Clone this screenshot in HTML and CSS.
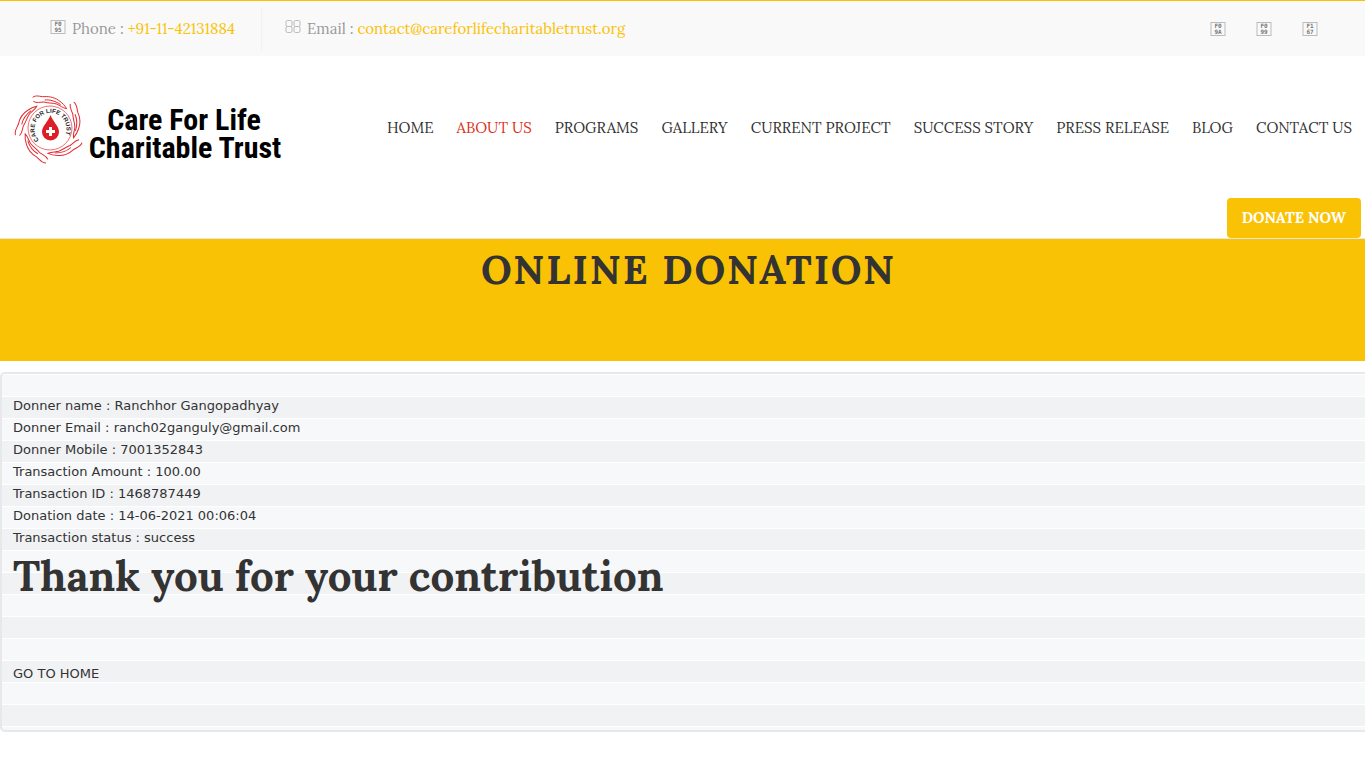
FILE: index.html
```html
<!DOCTYPE html>
<html lang="en">
<head>
<meta charset="utf-8">
<title>Online Donation - Care For Life Charitable Trust</title>
<link rel="stylesheet" href="styles.css">
</head>
<body>
<div class="topbar">
  <div class="contact"><svg class="icon" width="16" height="14" viewBox="0 0 16 14"><rect x="1" y=".5" width="14" height="13"/><text x="8" y="6">F0</text><text x="8" y="12">95</text></svg>Phone : <a href="#">+91-11-42131884</a></div>
  <div class="contact"><svg class="icon" width="16" height="14" viewBox="0 0 16 14"><rect x="1" y=".5" width="6" height="6" rx="1.500"/><rect x="9" y=".5" width="6" height="6" rx="1.500"/><rect x="1" y="6.500" width="6" height="6" rx="1.500"/><rect x="9" y="6.500" width="6" height="6" rx="1.500"/></svg>Email : <a href="#">contact@careforlifecharitabletrust.org</a></div>
  <div class="social">
    <a href="#" aria-label="Facebook"><svg class="icon" width="16" height="14" viewBox="0 0 16 14"><rect x="1" y=".5" width="14" height="13"/><text x="8" y="6">F0</text><text x="8" y="12">9A</text></svg></a>
    <a href="#" aria-label="Twitter"><svg class="icon" width="16" height="14" viewBox="0 0 16 14"><rect x="1" y=".5" width="14" height="13"/><text x="8" y="6">F0</text><text x="8" y="12">99</text></svg></a>
    <a href="#" aria-label="YouTube"><svg class="icon" width="16" height="14" viewBox="0 0 16 14"><rect x="1" y=".5" width="14" height="13"/><text x="8" y="6">F1</text><text x="8" y="12">67</text></svg></a>
  </div>
</div>
<header class="header">
  <div class="header-row">
    <a class="logo" href="#" aria-label="Care For Life Charitable Trust">
      <svg width="266" height="66" viewBox="0 0 266 66">
        <defs>
          <path id="ring" d="M23 44A16 16 0 1 1 46 44"/>
          <g id="hand">
            <path d="M-52-92C-42-100-30-94-18-94C0-96 18-90 30-80C38-74 44-68 50-58C38-60 30-68 20-72C6-76-6-74-18-78C-30-78-40-74-50-80"/>
            <path d="M-16-84C0-86 18-80 32-70"/>
          </g>
        </defs>
        <g class="hands" transform="translate(34 32) scale(.333)">
          <use href="#hand"/><use href="#hand" transform="rotate(72)"/><use href="#hand" transform="rotate(144)"/><use href="#hand" transform="rotate(216)"/><use href="#hand" transform="rotate(288)"/>
          <circle r="66"/>
        </g>
        <text class="ring-text"><textPath href="#ring">CARE FOR LIFE TRUST</textPath></text>
        <path d="M34.500 19C37 26 43 30 43 36A8.500 8.500 0 0 1 26 36C26 30 32 26 34.500 19Z" fill="#dc1f27"/>
        <path d="M34.500 31v9M30 35.500h9" stroke="#fff" stroke-width="3"/>
        <text class="logo-text" x="168" y="34">Care For Life</text>
        <text class="logo-text" x="169" y="62">Charitable Trust</text>
      </svg>
    </a>
    <nav class="nav">
      <a href="#">HOME</a><a class="active" href="#">ABOUT US</a><a href="#">PROGRAMS</a><a href="#">GALLERY</a><a href="#">CURRENT PROJECT</a><a href="#">SUCCESS STORY</a><a href="#">PRESS RELEASE</a><a href="#">BLOG</a><a href="#">CONTACT US</a>
    </nav>
  </div>
  <div class="donate-row"><button class="donate" type="button">DONATE NOW</button></div>
</header>
<section class="banner"><h1>ONLINE DONATION</h1></section>
<main class="receipt">
  <p>Donner name : Ranchhor Gangopadhyay</p>
  <p>Donner Email : ranch02ganguly@gmail.com</p>
  <p>Donner Mobile : 7001352843</p>
  <p>Transaction Amount : 100.00</p>
  <p>Transaction ID : 1468787449</p>
  <p>Donation date : 14-06-2021 00:06:04</p>
  <p>Transaction status : success</p>
  <h2>Thank you for your contribution</h2>
  <a class="home" href="#">GO TO HOME</a>
</main>
</body>
</html>
```
FILE: styles.css
```css
* { box-sizing: border-box; }
body { margin: 0; background: #fff; color: #333; font-family: Lora, "Liberation Serif", serif; font-size: 15px; overflow-x: hidden; }
a { text-decoration: none; color: inherit; }
.topbar { display: flex; align-items: center; height: 56px; padding: 0 47px 0 50px; border-top: 1px solid #fac204; background: #f9f9f9; color: #999; }
.contact { display: flex; align-items: center; height: 42px; white-space: pre; }
.contact a { color: #fac204; }
.contact + .contact { margin-left: 26px; padding-left: 23px; border-left: 1px solid #f1f1f1; }
.icon { display: block; fill: none; stroke: #bbb; }
.icon text { fill: #777; stroke: none; font: 700 6px "DejaVu Sans Mono", monospace; text-anchor: middle; }
.contact .icon { margin: 0 6px 3px 0; }
.social { display: flex; gap: 30px; margin-left: auto; }
.header { border-bottom: 1px solid #e7e7e7; }
.header-row { display: flex; align-items: center; height: 142px; padding: 0 13px 0 16px; }
.logo { display: flex; margin-top: 4px; }
.logo svg { overflow: visible; }
.hands { fill: none; stroke: #e3282f; stroke-width: 3px; }
.hands circle { stroke-width: 2px; }
.logo-text { font-family: "Liberation Sans Narrow", "Roboto Condensed", "DejaVu Sans Condensed", sans-serif; font-weight: 700; font-size: 30px; text-anchor: middle; fill: #000; }
.ring-text { font-family: "Liberation Sans", sans-serif; font-weight: 700; font-size: 6px; fill: #222; }
.nav { display: flex; flex: 1; justify-content: space-between; margin-left: 105px; white-space: nowrap; }
.nav .active { color: #dd3221; }
.donate-row { display: flex; justify-content: flex-end; padding-right: 4px; }
.donate { height: 40px; padding: 0 15px 1px; border: 0; border-radius: 4px; background: #fac204; color: #fff; font: 700 15px Lora, "Liberation Serif", serif; }
.banner { min-height: 122px; padding: 4px 0 0 12px; background: #fac204; text-align: center; }
.banner h1 { margin: 0; font-size: 40px; line-height: 54px; letter-spacing: 2px; }
.receipt { margin: 11px -4px 0 0; min-height: 360px; padding: 21px 11px; border: 2px solid #e7e8e9; border-radius: 5px; background: repeating-linear-gradient(#fff 0 1px, #f7f8fa 1px 22px, #fff 22px 23px, #f1f2f4 23px 44px); font: 13px/22px "DejaVu Sans", sans-serif; }
.receipt p { margin: 0; }
.receipt h2 { margin: 0; font: 700 42px/54px Lora, "Liberation Serif", serif; }
.home { display: inline-block; margin-top: 60px; }
```
